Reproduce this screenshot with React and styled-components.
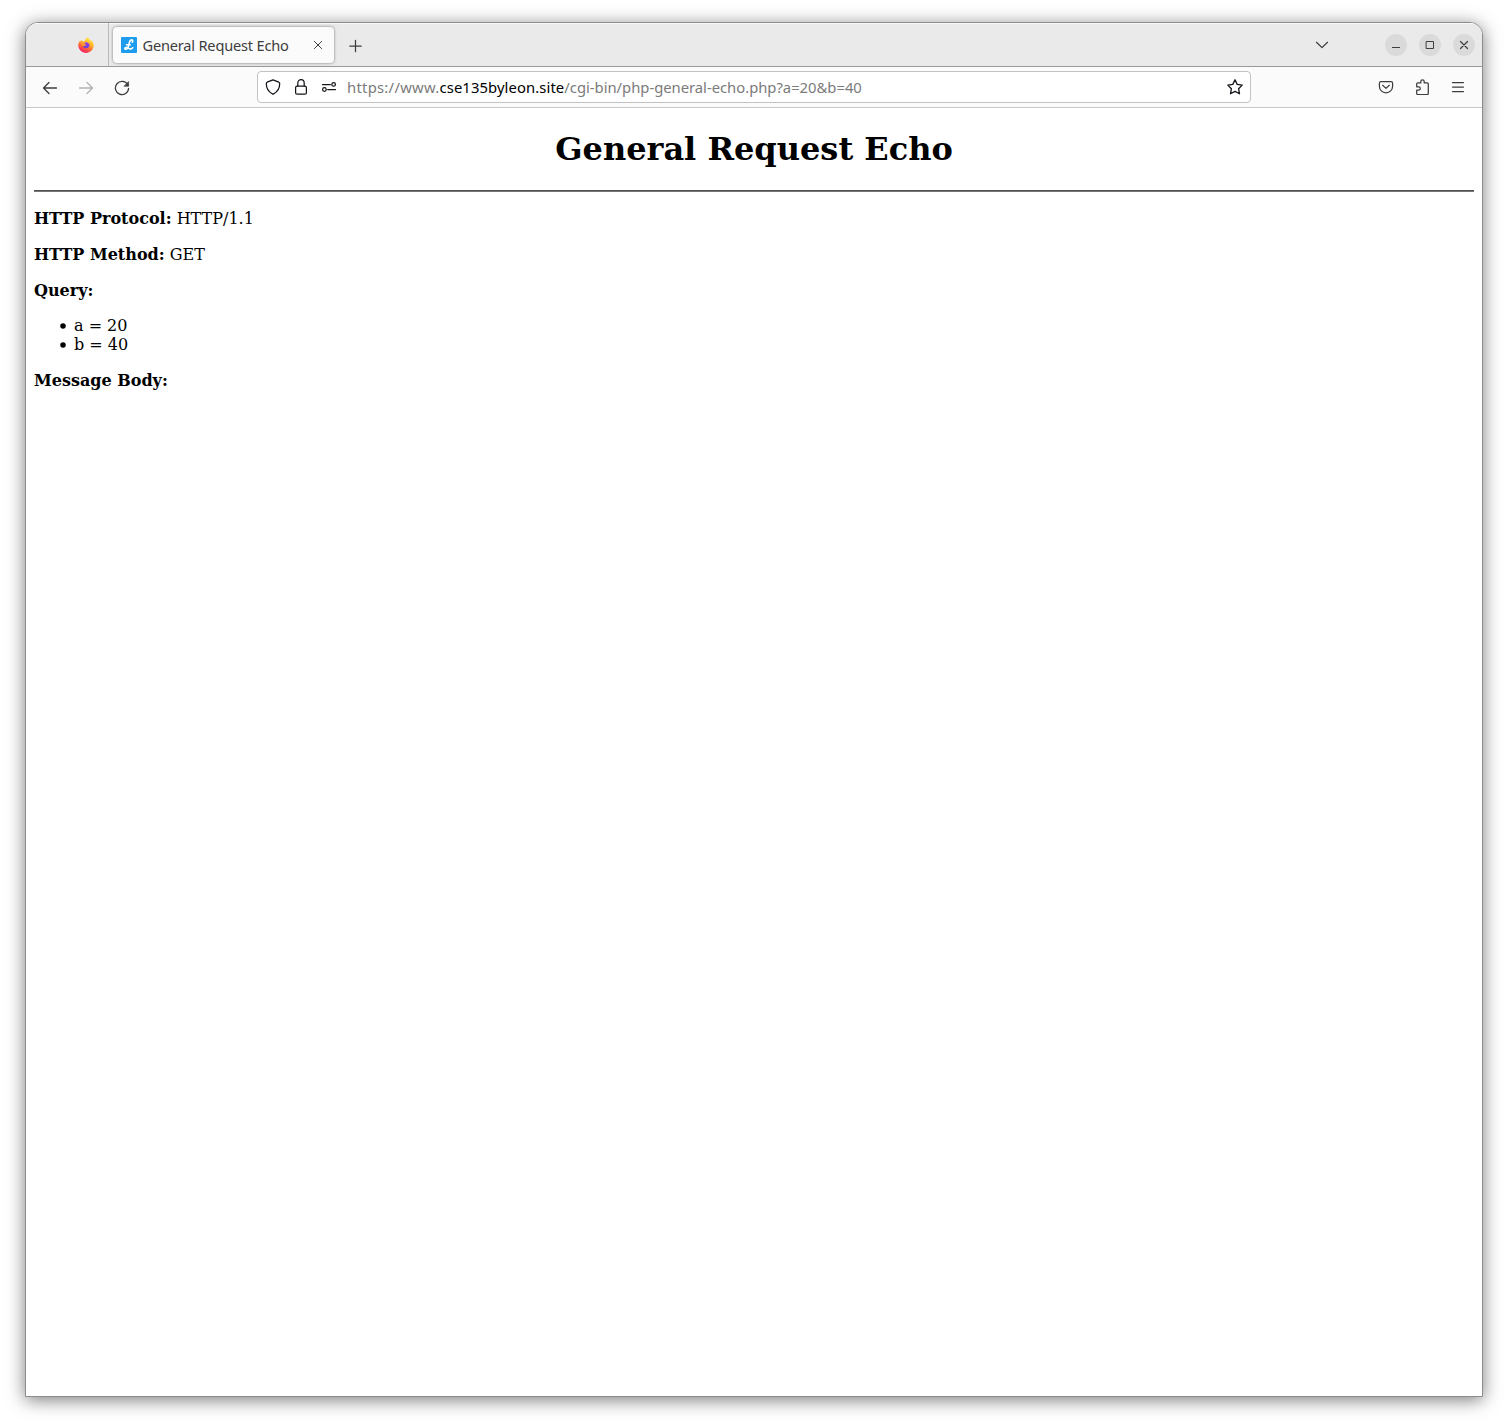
import React from "react";
import styled, { createGlobalStyle } from "styled-components";

const GlobalStyle = createGlobalStyle`
  html, body { margin: 0; padding: 0; background: #fff; }
  * { box-sizing: border-box; }
`;

const Desktop = styled.div`
  width: 1508px;
  height: 1425px;
  padding: 22px 25px 28px;
  overflow: hidden;
  background: #fff;
`;

const Window = styled.div`
  display: flex;
  flex-direction: column;
  width: 1458px;
  height: 1375px;
  border: 1px solid #8c8c8c;
  border-radius: 13px 13px 0 0;
  overflow: hidden;
  background: #fff;
  box-shadow: 0 3px 18px rgba(0, 0, 0, 0.52);
`;

const TitleBar = styled.header`
  display: flex;
  align-items: center;
  flex: none;
  height: 44px;
  background: #eaeaea;
  border-bottom: 1px solid #999;
  box-shadow: inset 0 1px 0 #f8f8f8;
  font-family: "Noto Sans", "Open Sans", sans-serif;
`;

const PinnedArea = styled.div`
  display: flex;
  align-items: center;
  width: 83px;
  height: 43px;
  padding-left: 52px;
  border-right: 1px solid #b8b8b8;
`;

const Tab = styled.div`
  display: flex;
  align-items: center;
  width: 221px;
  height: 36px;
  margin-left: 4px;
  padding: 0 8px 0 8px;
  background: #fbfbfb;
  border-radius: 4px;
  box-shadow: 0 0 3px rgba(0, 0, 0, 0.5);
`;

const TabTitle = styled.span`
  flex: 1;
  margin-left: 5.5px;
  font-size: 14.6px;
  line-height: 20px;
  letter-spacing: -0.2px;
  white-space: nowrap;
  color: #3d3d3d;
`;

const IconButton = styled.span`
  display: flex;
  align-items: center;
  justify-content: center;
  flex: none;
  width: ${(p) => p.$w || 36}px;
  height: 32px;
  padding-top: ${(p) => p.$drop || 0}px;
  color: ${(p) => p.$color || "#3d3d3d"};
`;

const Spacer = styled.div`
  flex: 1;
`;

const WindowControls = styled.div`
  display: flex;
  gap: 12px;
  margin: 0 7px 0 45px;
`;

const WindowButton = styled.span`
  display: flex;
  width: 22px;
  height: 22px;
  border-radius: 50%;
  background: #dadada;
  color: #3d3d3d;
`;

const Toolbar = styled.nav`
  display: flex;
  align-items: center;
  flex: none;
  height: 41px;
  padding: 0 6px;
  background: #fbfbfb;
  border-bottom: 1px solid #c8c8c8;
`;

const AddressBar = styled.div`
  display: flex;
  align-items: center;
  width: 994px;
  height: 32px;
  margin-left: 117px;
  padding: 0 1px;
  background: #fff;
  border: 1px solid #c2c2c2;
  border-radius: 4px;
`;

const Url = styled.div`
  display: flex;
  flex: 1;
  margin-left: 4px;
  font-family: "Noto Sans", "Open Sans", sans-serif;
  font-size: 14.8px;
  line-height: 20px;
  white-space: nowrap;
  color: #7b7b7b;
`;

const UrlPart = styled.span`
  color: ${(p) => (p.$host ? "#000" : "inherit")};
  letter-spacing: ${(p) => p.$track || 0}px;
`;

const Page = styled.main`
  flex: 1;
  padding: 0 8px;
  font-family: "DejaVu Serif", serif;
  font-size: 16px;
  line-height: 19px;
  color: #000;
`;

const Heading = styled.h1`
  margin: 22px 0;
  font-size: 32px;
  line-height: 38px;
  text-align: center;
`;

const Rule = styled.hr`
  height: 2px;
  margin: 0 0 16px;
  border: 0;
  border-top: 1px solid #4f4f4f;
  background: #777;
`;

const Line = styled.p`
  margin: 0 0 15px;
  padding-top: 1px;
  line-height: 20px;
`;

const List = styled.ul`
  margin: 0 0 16px;
  padding-left: 26px;
  list-style: none;
`;

const Item = styled.li`
  display: flex;

  &::before {
    content: "";
    width: 6px;
    height: 6px;
    margin: 7px 8px 0 0;
    border-radius: 50%;
    background: #000;
    transform: scale(0.92);
  }
`;

function Icon({ size = 16, children, w = 1.25 }) {
  return (
    <svg width={size} height={size} viewBox={`0 0 ${size} ${size}`} fill="none" stroke="currentColor"
      strokeWidth={w} strokeLinecap="round" strokeLinejoin="round">
      {children}
    </svg>
  );
}

function FirefoxLogo() {
  return (
    <svg width="16" height="16" viewBox="0 0 16 16">
      <defs>
        <linearGradient id="flame" x1="0.8" y1="0.05" x2="0.35" y2="1">
          <stop offset="0" stopColor="#fff14c" />
          <stop offset="0.38" stopColor="#ffb52d" />
          <stop offset="0.65" stopColor="#ff6b36" />
          <stop offset="1" stopColor="#f5156c" />
        </linearGradient>
        <linearGradient id="globe" x1="0.8" y1="0" x2="0.3" y2="1">
          <stop offset="0" stopColor="#a13ae8" />
          <stop offset="1" stopColor="#5b45dc" />
        </linearGradient>
      </defs>
      <path fill="url(#flame)" d="M10.2.1c.1 1.2.7 1.9 1.6 2.7l1.4 1.5c0-.5-.1-.9-.2-1.2 1.5 1 2.8 3 2.8 5.4A7.7 7.7 0 0 1 8 16 7.7 7.7 0 0 1 .2 8.500c0-2 .7-3.700 1.600-4.600l.3 1c.3-.9.9-1.600 1.600-2.100 0 .6.2 1.100.6 1.500 1-.1 1.600 0 2.200.3C7 2.500 8.300 1 10.200.1z" />
      <path fill="url(#globe)" d="M5.300 6.500c1.100-.1 1.500-.5 2-1 1.300-.8 3.800.2 4.200 2.200.3 2-1.300 3.600-3.300 3.600-1.800 0-3.200-1.200-3.300-2.800 1 .8 2.400.7 3.400-.1-.9 0-1.300-.4-1.500-.8-.6-.1-1.200-.5-1.500-1.100z" />
      <path fill="#ff9f2f" d="M3.300 6.100c1-.6 2.100-.5 3 .1.400.4 1 .5 1.700.5-.1.600-1 .9-1.500 1.200-.2.300-.2.600 0 .900-1.600.4-3.100-.9-3.200-2.700z" />
    </svg>
  );
}

function SiteLogo() {
  return (
    <svg width="16" height="16" viewBox="0 0 16 16">
      <rect width="16" height="16" rx="1" fill="#1f9cee" />
      <path d="M11.200 5.200C12.600 3.600 11.300 2.300 9.600 3.300 7.600 4.500 8.400 8.500 6.700 11c-.9 1.400-2.900 1.600-2.900.4 0-1.300 2-1.200 3.500-.3 1.700 1.100 3.400 1.200 4.400-.5M5.500 7.700h3.800" fill="none" stroke="#fff" strokeWidth="1.600" strokeLinecap="round" />
    </svg>
  );
}

export default function App() {
  return (
    <>
      <GlobalStyle />
      <Desktop>
        <Window>
          <TitleBar>
            <PinnedArea><FirefoxLogo /></PinnedArea>
            <Tab>
              <SiteLogo />
              <TabTitle>General Request Echo</TabTitle>
              <IconButton $w={16}><Icon w={1}><path d="M4.400 4.400l7.200 7.200M11.600 4.400l-7.200 7.200" /></Icon></IconButton>
            </Tab>
            <IconButton $w={42} $drop={2}><Icon w={1.250}><path d="M8.500 2.300v11.400M2.800 8h11.400" /></Icon></IconButton>
            <Spacer />
            <IconButton><Icon w={1.250}><path d="M2.500 5.300L8 10.600l5.500-5.300" /></Icon></IconButton>
            <WindowControls>
              <WindowButton><Icon size={22} w={1}><path strokeLinecap="butt" d="M7 13.500h8" /></Icon></WindowButton>
              <WindowButton><Icon size={22} w={1}><path strokeLinejoin="miter" d="M7.500 7.500h7v7h-7z" /></Icon></WindowButton>
              <WindowButton><Icon size={22} w={1.200}><path d="M7.500 7.500l7 7M14.500 7.500l-7 7" /></Icon></WindowButton>
            </WindowControls>
          </TitleBar>
          <Toolbar>
            <IconButton $drop={1}><Icon w={1.300}><path d="M14.500 8H1.700M7 2.500L1.500 8 7 13.500" /></Icon></IconButton>
            <IconButton $drop={1} $color="#b2b2b2"><Icon w={1.300}><path d="M1.500 8h12.800M9 2.500L14.500 8 9 13.500" /></Icon></IconButton>
            <IconButton $drop={1}>
              <Icon w={1.250}>
                <path d="M13.700 4.700A6.600 6.600 0 1 0 14.600 8.300" />
                <path d="M14.600 1.900v4.300h-4.300z" fill="currentColor" strokeWidth="0.700" />
              </Icon>
            </IconButton>
            <AddressBar>
              <IconButton $w={28} $color="#15141a"><Icon w={1.250}><path d="M8 .9l5.800 2.300c.6.300.9.800.9 1.400 0 4.100-2 8.200-6.100 10.300-.4.200-.8.200-1.200 0C3.300 12.800 1.300 8.700 1.300 4.600c0-.6.300-1.100.9-1.400z" /></Icon></IconButton>
              <IconButton $w={28} $color="#15141a"><Icon w={1.250}><rect x="2.600" y="7.200" width="10.800" height="8" rx="1.500" /><path d="M4.800 7V3.900a3.200 3.200 0 0 1 6.400 0V7" /></Icon></IconButton>
              <IconButton $w={28} $color="#15141a"><Icon w={1.250}><path d="M1.500 5.500h7.800M6.700 10.500h7.800" /><circle cx="12.600" cy="5.400" r="1.800" /><circle cx="3.400" cy="10.500" r="1.800" /></Icon></IconButton>
              <Url>
                <UrlPart $track={0.27}>https://www.</UrlPart>
                <UrlPart $host $track={0.1}>cse135byleon.site</UrlPart>
                <UrlPart $track={-0.01}>/cgi-bin/php-general-echo.php?a=20&amp;b=40</UrlPart>
              </Url>
              <IconButton $w={28} $color="#15141a"><Icon w={1.300}><path d="M8 .8l2.200 4.600 5 .7-3.600 3.600.9 5.100L8 12.400l-4.500 2.400.9-5.100L.8 6.100l5-.7z" /></Icon></IconButton>
            </AddressBar>
            <Spacer />
            <IconButton><Icon w={1.250}><path d="M3 2.600h10c1 0 1.600.6 1.600 1.600v3a6.600 6.600 0 0 1-13.200 0v-3c0-1 .6-1.600 1.600-1.600zM4.700 6.300L8 9.400l3.300-3.100" /></Icon></IconButton>
            <IconButton><Icon w={1.250}><path d="M2.700 6.600V5c0-.7.400-1.100 1.100-1.100h3V2.500a1.700 1.700 0 0 1 3.400 0v1.400h3c.7 0 1.100.4 1.100 1.100v9.400c0 .7-.4 1.100-1.100 1.100H3.800c-.7 0-1.100-.4-1.100-1.100v-3.200h1.900a1.700 1.700 0 0 0 0-3.400H2.700z" /></Icon></IconButton>
            <IconButton><Icon w={1.250}><path d="M2.500 3.500h11M2.500 8h11M2.500 12.500h11" /></Icon></IconButton>
          </Toolbar>
          <Page>
            <Heading>General Request Echo</Heading>
            <Rule />
            <Line><b>HTTP Protocol:</b> HTTP/1.1</Line>
            <Line><b>HTTP Method:</b> GET</Line>
            <Line><b>Query:</b></Line>
            <List>
              <Item>a = 20</Item>
              <Item>b = 40</Item>
            </List>
            <Line><b>Message Body:</b></Line>
          </Page>
        </Window>
      </Desktop>
    </>
  );
}
